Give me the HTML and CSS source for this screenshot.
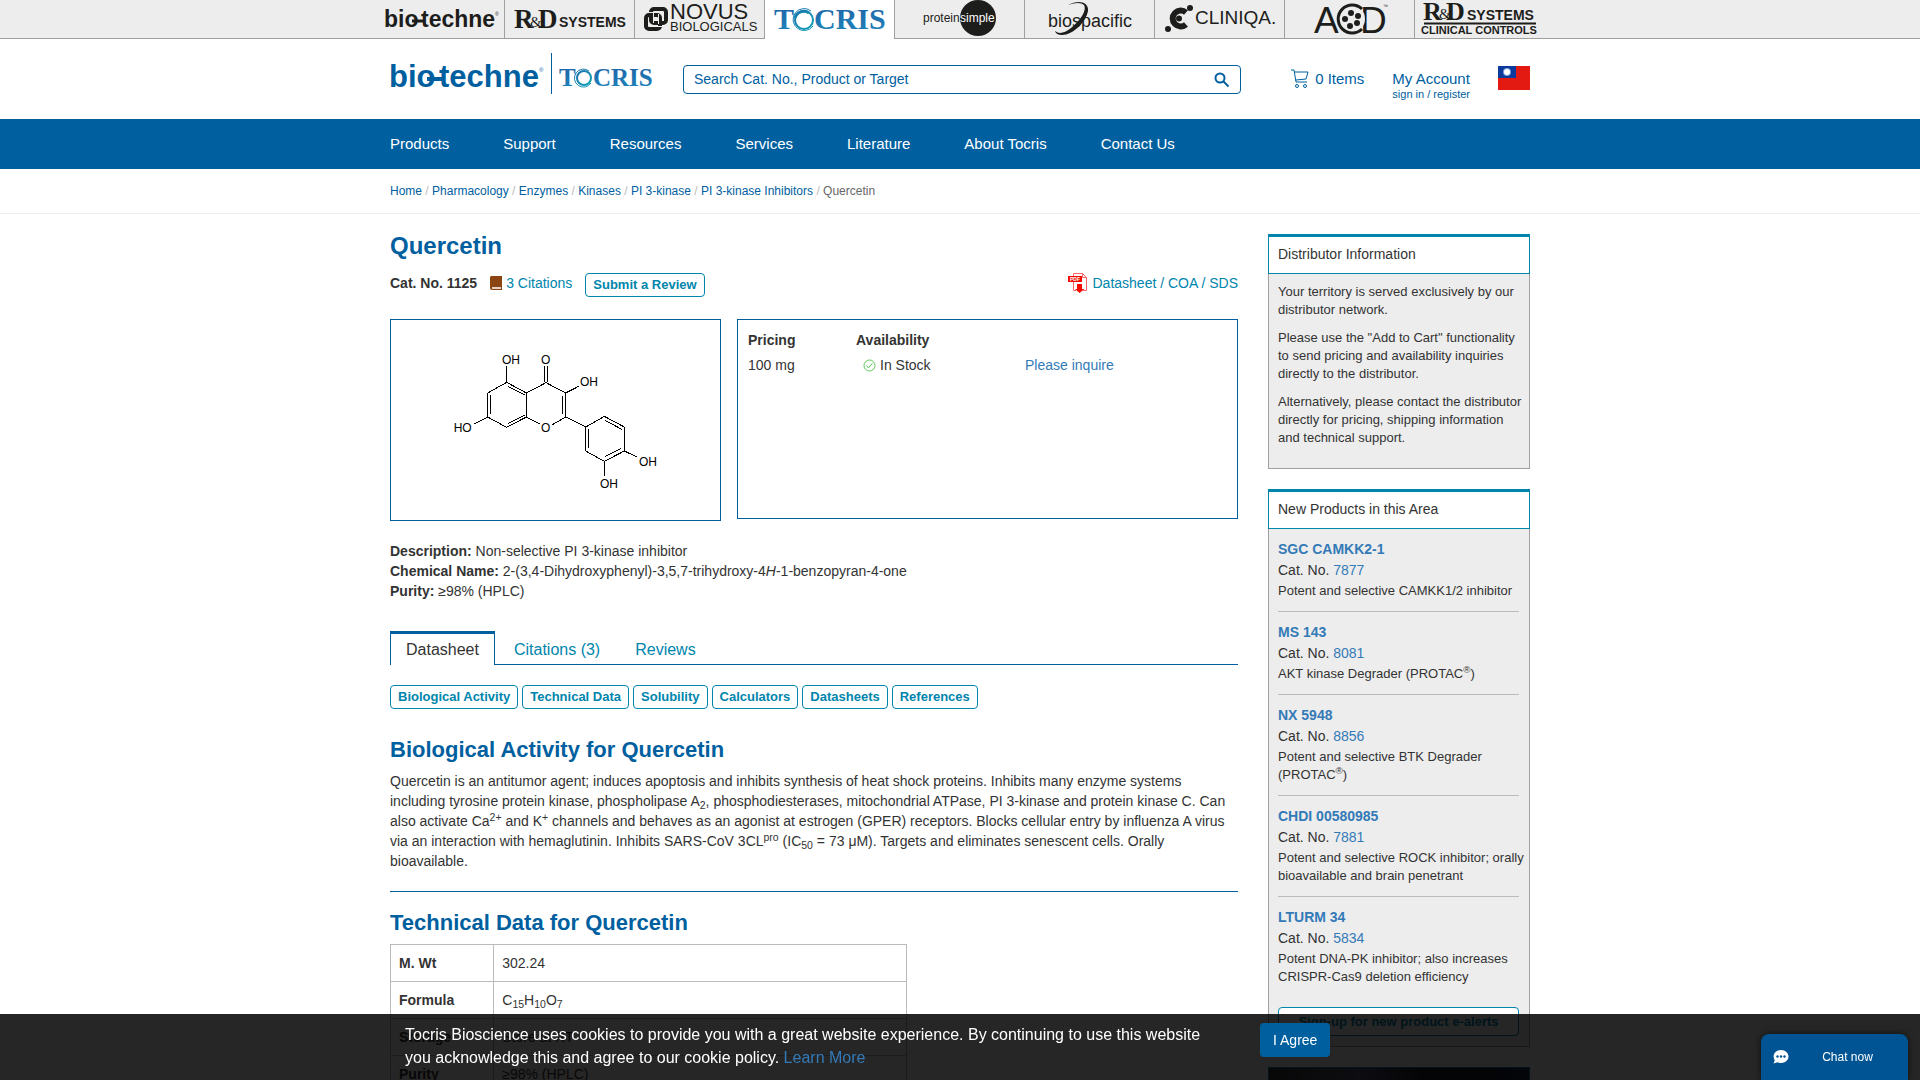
FILE: index.html
```html
<!DOCTYPE html>
<html lang="en">
<head>
<meta charset="utf-8">
<title>Quercetin | PI 3-kinase Inhibitors | Tocris Bioscience</title>
<meta name="viewport" content="width=device-width, initial-scale=1">
<link rel="stylesheet" href="styles.css">
</head>
<body>
<svg class="defs" width="0" height="0" aria-hidden="true">
  <defs>
    <linearGradient id="ring" x1="0" y1="0" x2="1" y2="1"><stop offset="0" stop-color="#1b6fae"/><stop offset="1" stop-color="#0fa3b5"/></linearGradient>
    <linearGradient id="tocris" x1="0" y1="0" x2="0" y2="1"><stop offset="0" stop-color="#1f62a5"/><stop offset="1" stop-color="#1d86bd"/></linearGradient>
  </defs>
</svg>

<div class="brands">
  <nav class="container brands-list" aria-label="Brands">
    <a class="brand" href="#" aria-label="Bio-Techne">
      <svg viewBox="0 0 129 38"><text class="sans bold" x="9" y="27" font-size="23">bio</text><text class="sans bold" x="46" y="27" font-size="23">techne</text><path d="M37 21h12" stroke-width="3"/><text class="sans" x="120" y="16" font-size="5">®</text></svg>
    </a>
    <a class="brand" href="#" aria-label="R&amp;D Systems">
      <svg viewBox="0 0 129 38"><text class="serif bold" x="9" y="28" font-size="27">R</text><text class="serif bold" x="33" y="28" font-size="27">D</text><text class="serif" x="25" y="27" font-size="15">&amp;</text><text class="sans bold" x="54" y="27" font-size="14">SYSTEMS</text></svg>
    </a>
    <a class="brand" href="#" aria-label="Novus Biologicals">
      <svg viewBox="0 0 129 38"><g fill="none" stroke="#1d1d1b" stroke-width="4"><rect x="16" y="9" width="15" height="14" rx="3"/><rect x="11" y="15" width="14" height="14" rx="3"/></g><g fill="none" stroke="#ededed" stroke-width="1"><path d="M13 12.500h10M28.500 12v9M13.500 18v8M19 26.500h9M18.500 13v10M23.500 14v10"/></g><text class="sans" x="35" y="19" font-size="22">NOVUS</text><text class="sans" x="35" y="31" font-size="13">BIOLOGICALS</text></svg>
    </a>
    <a class="brand brand-active" href="#" aria-label="Tocris" aria-current="true">
      <svg viewBox="0 0 129 38"><g fill="url(#tocris)"><text class="serif bold" x="9" y="29" font-size="30">T</text><text class="serif bold" x="49" y="29" font-size="30">CRIS</text></g><g fill="none" stroke="url(#ring)"><circle cx="39" cy="20" r="9" stroke-width="2"/><path d="M46 11A11 11 0 1 0 48 26" stroke-width="1"/><path d="M30 18a9 9 0 0 1 14-5" stroke-width="3"/></g></svg>
    </a>
    <a class="brand" href="#" aria-label="ProteinSimple">
      <svg viewBox="0 0 129 38"><circle cx="83" cy="18" r="18"/><text class="sans" x="28" y="22" font-size="12">protein</text><text class="sans white" x="65" y="22" font-size="12">simple</text></svg>
    </a>
    <a class="brand" href="#" aria-label="Biospacific">
      <svg viewBox="0 0 129 38"><text class="sans" x="23" y="27" font-size="18">biospacific</text><path d="M43 5C54-1 64 2 63 11C61 22 48 35 37 35Q31 35 30 31Q36 36 46 28C56 20 62 10 59 5Q55 1 43 5Z"/></svg>
    </a>
    <a class="brand" href="#" aria-label="Cliniqa">
      <svg viewBox="0 0 129 38"><path d="M31 12.500A8 8 0 1 0 31 24.500" fill="none" stroke="#1d1d1b" stroke-width="6"/><circle cx="24" cy="18.500" r="3"/><circle cx="35" cy="8" r="3"/><circle cx="13" cy="29" r="3"/><text class="sans" x="40" y="24" font-size="19">CLINIQA.</text></svg>
    </a>
    <a class="brand" href="#" aria-label="ACD">
      <svg viewBox="0 0 129 38"><text class="sans" x="29" y="33" font-size="37">A</text><text class="sans" x="75" y="33" font-size="37">D</text><circle class="mask" cx="66" cy="19" r="14"/><path d="M77 9A14 14 0 1 0 77 29" fill="none" stroke="#1d1d1b" stroke-width="3"/><circle cx="66" cy="13" r="3"/><circle cx="60" cy="19" r="3"/><circle cx="65" cy="26" r="3"/><circle cx="73" cy="16" r="3"/><circle cx="72" cy="23" r="3"/><text class="sans" x="98" y="8" font-size="5">™</text></svg>
    </a>
    <a class="brand" href="#" aria-label="R&amp;D Systems Clinical Controls">
      <svg viewBox="0 0 129 38"><text class="serif bold" x="8" y="20" font-size="26">R</text><text class="serif bold" x="31" y="20" font-size="26">D</text><text class="serif" x="24" y="19" font-size="15">&amp;</text><text class="sans bold" x="52" y="20" font-size="14">SYSTEMS</text><path d="M9 23.500h112" stroke-width="2"/><text class="sans bold" x="6" y="34" font-size="11">CLINICAL CONTROLS</text></svg>
    </a>
  </nav>
</div>

<header class="container header">
  <a class="logo" href="#" aria-label="Bio-Techne Tocris">
    <svg viewBox="0 0 270 42"><text class="sans bold" x="-1" y="34" font-size="31">bio</text><text class="sans bold" x="49" y="34" font-size="31">techne</text><path d="M37 26h16" stroke-width="4"/><text class="sans" x="149" y="19" font-size="6">®</text><path d="M161.500 0v41" stroke-width="1"/><g fill="url(#tocris)"><text class="serif bold" x="169" y="33" font-size="25">T</text><text class="serif bold" x="203" y="33" font-size="25">CRIS</text></g><g fill="none" stroke="url(#ring)"><circle cx="194" cy="25" r="7" stroke-width="2"/><path d="M199 18A9 9 0 1 0 201 30" stroke-width="1"/></g></svg>
  </a>
  <form class="search" role="search">
    <input type="search" aria-label="Search" placeholder="Search Cat. No., Product or Target">
    <button type="button" aria-label="Search"><svg viewBox="0 0 16 16"><circle cx="6" cy="6" r="4.500"/><path d="M9.500 9.500l5 5"/></svg></button>
  </form>
  <a class="cart" href="#"><svg viewBox="0 0 18 20"><path d="M0 1h3l2 12h11M3 3h14l-2 7-10 1"/><circle cx="6" cy="17" r="1.500"/><circle cx="14" cy="17" r="1.500"/></svg>0 Items</a>
  <div class="account"><a href="#">My Account</a><a class="signin" href="#">sign in / register</a></div>
  <a class="flag" href="#" aria-label="Taiwan"><svg viewBox="0 0 32 24"><path d="M0 0h32v24H0z" fill="#e21a12"/><path d="M0 0h18v12H0z" fill="#0b3a9c"/><circle cx="9" cy="6" r="4" fill="#7fa0dc"/><circle cx="9" cy="6" r="3" fill="#fff"/></svg></a>
</header>

<nav class="mainnav" aria-label="Main">
  <div class="container mainnav-list">
    <a href="#">Products</a><a href="#">Support</a><a href="#">Resources</a><a href="#">Services</a><a href="#">Literature</a><a href="#">About Tocris</a><a href="#">Contact Us</a>
  </div>
</nav>

<nav class="crumbs" aria-label="Breadcrumb">
  <div class="container"><a href="#">Home</a> <i>/</i> <a href="#">Pharmacology</a> <i>/</i> <a href="#">Enzymes</a> <i>/</i> <a href="#">Kinases</a> <i>/</i> <a href="#">PI 3-kinase</a> <i>/</i> <a href="#">PI 3-kinase Inhibitors</a> <i>/</i> <span>Quercetin</span></div>
</nav>

<div class="container columns">
  <main>
    <h1>Quercetin</h1>
    <div class="meta">
      <strong>Cat. No. 1125</strong>
      <a class="citations" href="#"><svg viewBox="0 0 12 14"><path d="M1 0h11v14H2Q0 14 0 12V1z" fill="#8b4513"/><path d="M2 11.500h9M2 12.500h9" stroke="#fff" stroke-width="1"/><path d="M2 12h9" stroke="#8b4513" stroke-width=".5"/></svg>3 Citations</a>
      <button class="pill" type="button">Submit a Review</button>
      <a class="pdf" href="#"><svg viewBox="0 0 20 20"><path d="M5.500 3V.500h9l4 4v13H15M5.500 9v8.500H8M14.500.500v4h4" fill="none" stroke="#f66" stroke-width="1"/><path d="M0 3h14v6H0z" fill="#f20d00"/><text x="2" y="8" font-size="5" class="sans bold white">PDF</text><path d="M9 11h5v5h2.500L11.500 20 7 16h2z" fill="#f20d00"/></svg>Datasheet / COA / SDS</a>
    </div>

    <div class="boxes">
      <figure class="structure">
        <svg viewBox="33 30 987 600" role="img" aria-label="Quercetin chemical structure">
          <g class="bonds">
            <path d="M380 169v48M380 217l-57 32v72l57 31 59-31v-72zM332 256v57M384 230l50 25M384 341l50-25"/>
            <path d="M439 249l59-31 59 31v72l-42 24M439 321l40 21M494 169v48M503 169v48M557 249l41-21M548 258v55"/>
            <path d="M323 321l-40 21M557 321l60 30v72l56 31 60-31v-72l-60-32-56 32M626 358v57M675 331l52 28M675 440l49-25M733 423l38 18M673 454v44"/>
          </g>
          <g class="atoms"><text x="366" y="162">OH</text><text x="483" y="162">O</text><text x="600" y="228">OH</text><text x="221" y="366">HO</text><text x="483" y="366">O</text><text x="777" y="468">OH</text><text x="660" y="534">OH</text></g>
        </svg>
      </figure>
      <div class="pricing">
        <table>
          <thead><tr><th scope="col">Pricing</th><th scope="col">Availability</th><td></td></tr></thead>
          <tbody><tr><td>100 mg</td><td><span class="stock"><svg viewBox="0 0 13 13"><circle cx="6.500" cy="6.500" r="5.500"/><path d="M3.500 6.500l2 2.500 4-5"/></svg>In Stock</span></td><td><a href="#">Please inquire</a></td></tr></tbody>
        </table>
      </div>
    </div>

    <div class="summary">
      <div><b>Description:</b> Non-selective PI 3-kinase inhibitor</div>
      <div><b>Chemical Name:</b> 2-(3,4-Dihydroxyphenyl)-3,5,7-trihydroxy-4<em>H</em>-1-benzopyran-4-one</div>
      <div><b>Purity:</b> ≥98% (HPLC)</div>
    </div>

    <div class="tabs"><a class="tab-active" href="#">Datasheet</a><a href="#">Citations (3)</a><a href="#">Reviews</a></div>
    <div class="jumps">
      <button class="pill" type="button">Biological Activity</button>
      <button class="pill" type="button">Technical Data</button>
      <button class="pill" type="button">Solubility</button>
      <button class="pill" type="button">Calculators</button>
      <button class="pill" type="button">Datasheets</button>
      <button class="pill" type="button">References</button>
    </div>

    <section class="activity">
      <h2>Biological Activity for Quercetin</h2>
      <p>Quercetin is an antitumor agent; induces apoptosis and inhibits synthesis of heat shock proteins. Inhibits many enzyme systems including tyrosine protein kinase, phospholipase A<sub>2</sub>, phosphodiesterases, mitochondrial ATPase, PI 3-kinase and protein kinase C. Can also activate Ca<sup>2+</sup> and K<sup>+</sup> channels and behaves as an agonist at estrogen (GPER) receptors. Blocks cellular entry by influenza A virus via an interaction with hemaglutinin. Inhibits SARS-CoV 3CL<sup>pro</sup> (IC<sub>50</sub> = 73 μM). Targets and eliminates senescent cells. Orally bioavailable.</p>
    </section>

    <section class="technical">
      <h2>Technical Data for Quercetin</h2>
      <table class="data">
        <tr><th scope="row">M. Wt</th><td>302.24</td></tr>
        <tr><th scope="row">Formula</th><td>C<sub>15</sub>H<sub>10</sub>O<sub>7</sub></td></tr>
        <tr><th scope="row">Storage</th><td>Store at RT</td></tr>
        <tr><th scope="row">Purity</th><td>≥98% (HPLC)</td></tr>
      </table>
    </section>
  </main>

  <aside>
    <section class="panel">
      <h3>Distributor Information</h3>
      <div class="panel-body territory">
        <p>Your territory is served exclusively by our distributor network.</p>
        <p>Please use the "Add to Cart" functionality to send pricing and availability inquiries directly to the distributor.</p>
        <p>Alternatively, please contact the distributor directly for pricing, shipping information and technical support.</p>
      </div>
    </section>
    <section class="panel">
      <h3>New Products in this Area</h3>
      <div class="panel-body products">
        <article><a class="name" href="#">SGC CAMKK2-1</a><div>Cat. No. <a href="#">7877</a></div><p>Potent and selective CAMKK1/2 inhibitor</p></article>
        <article><a class="name" href="#">MS 143</a><div>Cat. No. <a href="#">8081</a></div><p>AKT kinase Degrader (PROTAC<sup>®</sup>)</p></article>
        <article><a class="name" href="#">NX 5948</a><div>Cat. No. <a href="#">8856</a></div><p>Potent and selective BTK Degrader (PROTAC<sup>®</sup>)</p></article>
        <article><a class="name" href="#">CHDI 00580985</a><div>Cat. No. <a href="#">7881</a></div><p>Potent and selective ROCK inhibitor; orally bioavailable and brain penetrant</p></article>
        <article><a class="name" href="#">LTURM 34</a><div>Cat. No. <a href="#">5834</a></div><p>Potent DNA-PK inhibitor; also increases CRISPR-Cas9 deletion efficiency</p></article>
        <button class="pill signup" type="button">Sign-up for new product e-alerts</button>
      </div>
    </section>
    <div class="promo"></div>
  </aside>
</div>

<div class="cookies" role="region" aria-label="Cookie notice">
  <div class="container cookies-row">
    <p>Tocris Bioscience uses cookies to provide you with a great website experience. By continuing to use this website you acknowledge this and agree to our cookie policy. <a href="#">Learn More</a></p>
    <button type="button">I Agree</button>
  </div>
</div>
<button class="chat" type="button"><svg viewBox="0 0 16 14"><path d="M8 0c4.500 0 7.500 3 7.500 6.500S12.500 13 8 13c-1.500 0-2.500-.3-3.500-.8L.5 13.500l1.300-3.200C1 9.200.6 8 .6 6.500.6 3 3.500 0 8 0z" fill="#fff"/><g fill="#005493"><circle cx="4.500" cy="6.500" r="1.200"/><circle cx="8" cy="6.500" r="1.200"/><circle cx="11.500" cy="6.500" r="1.200"/></g></svg><span>Chat now</span></button>
</body>
</html>
```

FILE: styles.css
```css
:root {
  --blue: #00609f;
  --teal: #0085ad;
  --link: #337ab7;
  --ink: #333;
  --panel: #ededed;
  --line: #a0a0a0;
}
* { box-sizing: border-box; }
body {
  margin: 0;
  font: 14px/20px "Liberation Sans", Arial, sans-serif;
  color: var(--ink);
  background: #fff;
}
a { color: var(--link); text-decoration: none; }
h1, h2, h3, p, figure { margin: 0; }
button { font-family: inherit; cursor: pointer; }
svg { display: block; flex: none; }
.defs { position: absolute; }
sub, sup { font-size: 75%; line-height: 0; position: relative; vertical-align: baseline; }
sup { top: -.5em; }
sub { bottom: -.25em; }
.sans { font-family: "Liberation Sans", Arial, sans-serif; }
.serif { font-family: "Liberation Serif", "Times New Roman", serif; }
.bold { font-weight: bold; }
.white { fill: #fff; }

.container { max-width: 1170px; margin: 0 auto; padding: 0 15px; }

/* Brand strip */
.brands { background: var(--panel); box-shadow: inset 0 -1px var(--line); }
.brands-list { display: flex; padding: 0; }
.brand { flex: 1; height: 39px; border-right: 1px solid var(--line); }
.brand:last-child { border-right-color: transparent; }
.brand svg { width: 129px; height: 38px; margin: 0 auto; overflow: visible; fill: #1d1d1b; stroke: none; }
.brand svg > path[stroke-width] { stroke: #1d1d1b; }
.brand .mask { fill: var(--panel); }
.brand-active { background: #fff; }

/* Header */
.header { display: flex; align-items: flex-start; padding-top: 14px; height: 80px; }
.logo svg { width: 270px; height: 42px; fill: var(--blue); }
.logo svg > path { stroke: var(--blue); }
.search {
  display: flex; align-items: center; flex: 1;
  height: 29px; margin: 12px 50px 0 23px;
  border: 1px solid var(--blue); border-radius: 4px;
}
.search input {
  flex: 1; min-width: 0; padding: 0 10px 2px; border: 0; outline: 0; background: none;
  font: inherit; color: var(--blue);
}
.search input::placeholder { color: var(--blue); opacity: 1; }
.search button { padding: 0 10px; border: 0; background: none; }
.search svg { width: 16px; height: 16px; fill: none; stroke: var(--blue); stroke-width: 2; }
.cart { display: flex; gap: 6px; margin: 16px 28px 0 0; font-size: 15px; color: var(--blue); }
.cart svg { width: 18px; height: 20px; fill: none; stroke: var(--blue); stroke-width: 1; }
.account { margin: 16px 28px 0 0; font-size: 15px; }
.account a { display: block; color: var(--blue); }
.account .signin { font-size: 11px; line-height: 10px; }
.flag svg { width: 32px; height: 24px; margin-top: 13px; }

/* Main navigation */
.mainnav { background: var(--blue); }
.mainnav-list { display: flex; gap: 54px; }
.mainnav a { color: #fff; font-size: 15px; line-height: 50px; }

.crumbs { border-bottom: 1px solid #eee; font-size: 12px; line-height: 44px; }
.crumbs a { color: var(--blue); }
.crumbs i { color: #bbb; font-style: normal; }
.crumbs span { color: #666; }

/* Columns */
.columns { display: grid; grid-template-columns: minmax(0, 1fr) 262px; gap: 30px; padding-top: 20px; }
h1 { font-size: 24px; line-height: 24px; color: var(--blue); }
.meta { display: flex; align-items: flex-start; gap: 13px; height: 24px; margin: 15px 0 22px; }
.meta a { display: flex; align-items: center; gap: 4px; color: var(--teal); }
.citations svg { width: 12px; height: 14px; }
.meta .pdf { margin-left: auto; }
.pdf svg { width: 20px; height: 20px; }
.pill {
  padding: 0 7px; border: 1px solid var(--teal); border-radius: 4px; background: #fff;
  font-size: 13px; font-weight: bold; line-height: 22px; color: var(--teal);
}
.boxes { display: flex; align-items: flex-start; gap: 16px; }
.structure { flex: 0 0 331px; border: 1px solid var(--blue); }
.structure svg { width: 329px; height: 200px; }
.bonds { fill: none; stroke: #000; stroke-width: 3; shape-rendering: crispEdges; }
.atoms { font-size: 36px; fill: #000; }
.pricing { flex: 1; min-height: 200px; padding: 8px 10px; border: 1px solid var(--blue); }
.pricing table { width: 100%; border-collapse: collapse; table-layout: fixed; line-height: 25px; }
.pricing th, .pricing td { padding: 0; text-align: left; }
.pricing th:nth-child(1) { width: 108px; }
.pricing th:nth-child(2) { width: 169px; }
.stock { display: flex; align-items: center; gap: 4px; padding-left: 7px; }
.stock svg { width: 13px; height: 13px; fill: none; stroke: #5cc75c; stroke-width: 1; }
.summary { margin: 20px 0 30px; }

.tabs { display: flex; gap: 3px; box-shadow: inset 0 -1px var(--blue); font-size: 16px; line-height: 30px; }
.tabs a { padding: 4px 16px 0; color: var(--teal); }
.tabs .tab-active {
  padding: 1px 15px 0; border: 1px solid var(--blue); border-width: 3px 1px 0;
  background: #fff; color: var(--ink);
}
.jumps { display: flex; flex-wrap: wrap; gap: 4px; margin: 20px 0 29px; }
h2 { font-size: 22px; line-height: 24px; color: var(--blue); }
.activity { padding-bottom: 20px; border-bottom: 1px solid var(--blue); }
.activity p { margin-top: 9px; }
.technical { padding-top: 19px; }
.data { width: 61%; margin-top: 9px; border-collapse: collapse; }
.data th, .data td { height: 37px; padding: 0 8px; border: 1px solid #bbb; text-align: left; }
.data th { width: 20%; }

/* Sidebar */
.panel { margin-bottom: 20px; }
.panel h3 {
  padding: 7px 10px 9px 9px; border: 1px solid var(--teal); border-top-width: 3px;
  font-size: 14px; font-weight: normal; line-height: 20px;
}
.panel-body { border: 1px solid var(--line); border-top: 0; background: var(--panel); }
.panel p { font-size: 13px; line-height: 18px; }
.territory { padding: 9px 5px 11px 9px; }
.territory p { margin-bottom: 10px; }
.products { padding: 0 10px 10px 9px; line-height: 21px; }
.products article { padding: 10px 0 11px; border-bottom: 1px solid #bbb; }
.products article p { margin: 1px -10px 0 0; }
.products article:last-of-type { border-bottom: 0; }
.name { display: block; font-weight: bold; }
.signup { width: 100%; margin-top: 10px; line-height: 27px; }
.promo { height: 120px; border: 1px solid var(--teal); background: linear-gradient(90deg, #3a3436, #57506c 35%, #1c1a2c 60%, #1a2238); }

/* Cookie notice and chat */
.cookies { position: fixed; right: 0; bottom: 0; left: 0; padding: 9px 0 11px; background: rgba(0, 0, 0, .85); }
.cookies-row { display: flex; align-items: flex-start; gap: 40px; padding: 0 30px; }
.cookies p { flex: 0 1 815px; font-size: 16px; line-height: 23px; color: #fff; }
.cookies button {
  padding: 0 13px; border: 0; border-radius: 4px; background: var(--blue);
  font-size: 14px; line-height: 34px; color: #fff;
}
.chat {
  position: fixed; right: 12px; bottom: 0; display: flex; align-items: center;
  width: 147px; height: 46px; padding: 0 12px; border: 0; border-radius: 8px 8px 0 0;
  background: #005493; box-shadow: 0 0 6px rgba(0, 0, 0, .6); font-size: 12px; color: #fff;
}
.chat svg { width: 16px; height: 14px; }
.chat span { flex: 1; padding-left: 10px; text-align: center; }
```
